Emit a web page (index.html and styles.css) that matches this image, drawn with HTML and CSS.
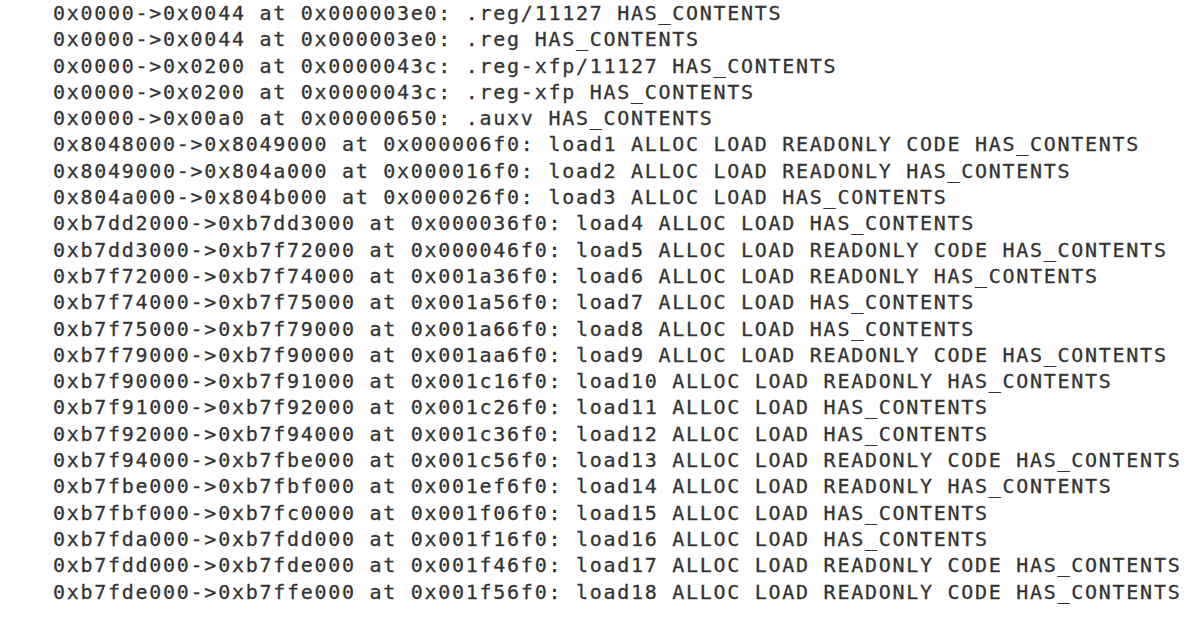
FILE: index.html
```html
<!DOCTYPE html>
<html lang="en">
<head>
<meta charset="utf-8">
<title>Sections</title>
<link rel="stylesheet" href="styles.css">
</head>
<body>
<div class="terminal">
<div class="line">0x0000->0x0044 at 0x000003e0: .reg/11127 HAS_CONTENTS</div>
<div class="line">0x0000->0x0044 at 0x000003e0: .reg HAS_CONTENTS</div>
<div class="line">0x0000->0x0200 at 0x0000043c: .reg-xfp/11127 HAS_CONTENTS</div>
<div class="line">0x0000->0x0200 at 0x0000043c: .reg-xfp HAS_CONTENTS</div>
<div class="line">0x0000->0x00a0 at 0x00000650: .auxv HAS_CONTENTS</div>
<div class="line">0x8048000->0x8049000 at 0x000006f0: load1 ALLOC LOAD READONLY CODE HAS_CONTENTS</div>
<div class="line">0x8049000->0x804a000 at 0x000016f0: load2 ALLOC LOAD READONLY HAS_CONTENTS</div>
<div class="line">0x804a000->0x804b000 at 0x000026f0: load3 ALLOC LOAD HAS_CONTENTS</div>
<div class="line">0xb7dd2000->0xb7dd3000 at 0x000036f0: load4 ALLOC LOAD HAS_CONTENTS</div>
<div class="line">0xb7dd3000->0xb7f72000 at 0x000046f0: load5 ALLOC LOAD READONLY CODE HAS_CONTENTS</div>
<div class="line">0xb7f72000->0xb7f74000 at 0x001a36f0: load6 ALLOC LOAD READONLY HAS_CONTENTS</div>
<div class="line">0xb7f74000->0xb7f75000 at 0x001a56f0: load7 ALLOC LOAD HAS_CONTENTS</div>
<div class="line">0xb7f75000->0xb7f79000 at 0x001a66f0: load8 ALLOC LOAD HAS_CONTENTS</div>
<div class="line">0xb7f79000->0xb7f90000 at 0x001aa6f0: load9 ALLOC LOAD READONLY CODE HAS_CONTENTS</div>
<div class="line">0xb7f90000->0xb7f91000 at 0x001c16f0: load10 ALLOC LOAD READONLY HAS_CONTENTS</div>
<div class="line">0xb7f91000->0xb7f92000 at 0x001c26f0: load11 ALLOC LOAD HAS_CONTENTS</div>
<div class="line">0xb7f92000->0xb7f94000 at 0x001c36f0: load12 ALLOC LOAD HAS_CONTENTS</div>
<div class="line">0xb7f94000->0xb7fbe000 at 0x001c56f0: load13 ALLOC LOAD READONLY CODE HAS_CONTENTS</div>
<div class="line">0xb7fbe000->0xb7fbf000 at 0x001ef6f0: load14 ALLOC LOAD READONLY HAS_CONTENTS</div>
<div class="line">0xb7fbf000->0xb7fc0000 at 0x001f06f0: load15 ALLOC LOAD HAS_CONTENTS</div>
<div class="line">0xb7fda000->0xb7fdd000 at 0x001f16f0: load16 ALLOC LOAD HAS_CONTENTS</div>
<div class="line">0xb7fdd000->0xb7fde000 at 0x001f46f0: load17 ALLOC LOAD READONLY CODE HAS_CONTENTS</div>
<div class="line">0xb7fde000->0xb7ffe000 at 0x001f56f0: load18 ALLOC LOAD READONLY CODE HAS_CONTENTS</div>
</div>
</body>
</html>
```

FILE: styles.css
```css
html, body {
  margin: 0;
  padding: 0;
  background: #ffffff;
}

.terminal {
  display: flex;
  flex-direction: column;
  padding: 0 0 0 53px;
  font-family: "DejaVu Sans Mono", "Liberation Mono", monospace;
  font-size: 20px;
  letter-spacing: 1.72px;
  line-height: 26.3px;
  color: #333333;
  -webkit-text-stroke: 0.3px #333333;
}

.line {
  white-space: pre;
}
```
